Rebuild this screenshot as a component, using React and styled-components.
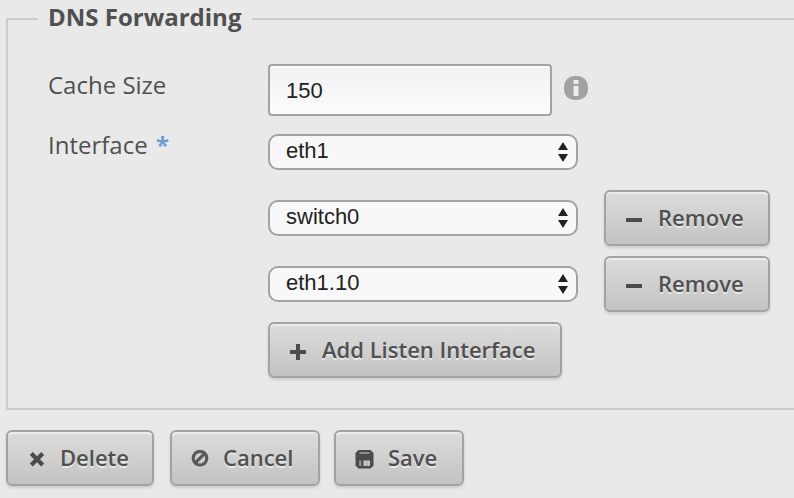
import React from "react";
import styled, { createGlobalStyle, css } from "styled-components";

const GlobalStyle = createGlobalStyle`
  * { box-sizing: border-box; }
  body {
    margin: 0;
    background: #e9e9e9;
    color: #505050;
    font-family: "Open Sans", sans-serif;
    overflow: hidden;
  }
`;

const Page = styled.main`
  width: 794px;
  height: 498px;
  padding: 3px 0 0 6px;
  overflow: hidden;
`;

const Panel = styled.section`
  display: flex;
  flex-direction: column;
  width: 820px;
  height: 407px;
`;

const PanelHead = styled.header`
  display: flex;
  align-items: flex-start;
  height: 30px;
`;

const Rule = styled.span`
  height: 15px;
  margin-top: 15px;
  border-top: 2px solid #ccc;
  ${(p) =>
    p.$lead
      ? css`
          width: 32px;
          border-left: 2px solid #ccc;
        `
      : css`
          flex: 1;
        `}
`;

const Legend = styled.h2`
  width: 214px;
  margin: 0;
  padding-left: 10px;
  font-size: 24px;
  line-height: 28px;
  font-weight: 700;
  white-space: nowrap;
`;

const PanelBody = styled.div`
  flex: 1;
  padding: 31px 0 0 40px;
  border: solid #ccc;
  border-width: 0 0 2px 2px;
`;

const Row = styled.div`
  display: grid;
  grid-template-columns: 220px 310px auto;
  align-items: center;
  height: ${(p) => p.$height}px;
  margin-bottom: ${(p) => p.$gap || 0}px;
`;

const Label = styled.label`
  font-size: 24px;
  line-height: 34px;
  align-self: start;
  margin-top: ${(p) => p.$offset}px;
  white-space: nowrap;
`;

const Required = styled.span`
  margin-left: 2px;
  color: #689fd3;
  font-weight: 700;
`;

const Field = styled.div`
  display: flex;
  align-items: center;
  gap: 12px;
`;

const TextInput = styled.input`
  flex: none;
  width: 284px;
  height: 52px;
  padding: 2px 16px 0;
  border: 2px solid #a3a3a3;
  border-radius: 4px;
  outline: 0;
  background: linear-gradient(#f1f1f1, #fcfcfc);
  box-shadow: inset 0 2px 0 #fff;
  color: #222;
  font: 22px "Liberation Sans", sans-serif;
`;

const SelectBox = styled.div`
  display: flex;
  align-items: center;
  justify-content: space-between;
  width: 310px;
  height: 36px;
  padding: 0 7px 0 16px;
  border: 2px solid #a3a3a3;
  border-radius: 10px;
  background: #f8f8f8;
  color: #222;
  font: 22px/25px "Liberation Sans", sans-serif;
`;

const SelectValue = styled.span`
  padding-bottom: 3px;
`;

const Button = styled.button`
  display: flex;
  align-items: center;
  width: ${(p) => p.$width}px;
  height: 56px;
  margin: 0 0 0 ${(p) => p.$indent || 0}px;
  padding: 0 0 2px ${(p) => p.$inset || 18}px;
  border: 2px solid #a3a3a3;
  border-radius: 6px;
  background: linear-gradient(#dcdcdc, #c3c3c3);
  box-shadow: inset 0 2px 0 #ececec, 0 2px 3px rgba(0, 0, 0, 0.12);
  color: #505050;
  font: 600 22px/30px "Open Sans", sans-serif;
  text-shadow: 0 2px 0 #e6e6e6;
  white-space: nowrap;
`;

const Glyph = styled.svg`
  flex: none;
  width: 20px;
  height: 20px;
  margin: 6px ${(p) => p.$gap}px 0 0;
  fill: #4b4b4b;
`;

const InfoBadge = styled.svg`
  flex: none;
  width: 24px;
  height: 24px;
  margin-bottom: 4px;
`;

const Actions = styled.footer`
  display: flex;
  padding-top: 20px;
`;

const icons = {
  minus: <rect x="2" y="8" width="16" height="4" rx="0.6" />,
  plus: <path d="M8 2h4v6h6v4h-6v6H8v-6H2V8h6z" />,
  close: (
    <path d="M5.8 2 10 6.2 14.2 2l3 3L13 9.2l4.2 4.2-3 3-4.2-4.2-4.2 4.2-3-3L7 9.2 2.8 5z" />
  ),
  cancel: (
    <g fill="none" stroke="#5a5a5a" strokeWidth="3.2">
      <circle cx="10" cy="8.2" r="6.8" />
      <path d="m5.5 12.7 9-9" />
    </g>
  ),
  save: (
    <>
      <path d="M3.5 0h12l3 3v12.5l-3 3h-12l-3-3V3z" />
      <path fill="#8c8c8c" d="M4.5 2h10v2h-10zM4 10.5h2.5V16H4z" />
      <path fill="#c6c6c6" d="M8.5 10.5H15V16H8.5z" />
      <path fill="#8c8c8c" d="M11 10.5h1.5V16H11z" opacity="0.4" />
    </>
  ),
};

function IconButton({ icon, gap, children, ...rest }) {
  return (
    <Button type="button" {...rest}>
      <Glyph viewBox="0 0 20 20" $gap={gap}>
        {icons[icon]}
      </Glyph>
      {children}
    </Button>
  );
}

function Select({ value }) {
  return (
    <SelectBox role="combobox" tabIndex={0}>
      <SelectValue>{value}</SelectValue>
      <svg width="12" height="20" viewBox="0 0 12 20" fill="#222">
        <path d="M6 0l5 8H1zM1 12h10l-5 8z" />
      </svg>
    </SelectBox>
  );
}

function InfoIcon() {
  return (
    <InfoBadge viewBox="0 0 24 24">
      <rect width="24" height="24" rx="10.5" fill="#a1a1a1" />
      <path fill="#ececec" d="M9.5 4h5v4h-5zM9.5 10h5v10h-5z" />
    </InfoBadge>
  );
}

export default function App() {
  return (
    <>
      <GlobalStyle />
      <Page>
        <Panel>
          <PanelHead>
            <Rule $lead />
            <Legend>DNS Forwarding</Legend>
            <Rule />
          </PanelHead>
          <PanelBody>
            <Row $height={52} $gap={18}>
              <Label $offset={4}>Cache Size</Label>
              <Field>
                <TextInput defaultValue="150" />
                <InfoIcon />
              </Field>
            </Row>
            <Row $height={36} $gap={20}>
              <Label $offset={-6}>
                Interface <Required>*</Required>
              </Label>
              <Select value="eth1" />
            </Row>
            <Row $height={56} $gap={10}>
              <span />
              <Select value="switch0" />
              <IconButton icon="minus" gap={14} $width={166} $indent={26}>
                Remove
              </IconButton>
            </Row>
            <Row $height={56} $gap={10}>
              <span />
              <Select value="eth1.10" />
              <IconButton icon="minus" gap={14} $width={166} $indent={26}>
                Remove
              </IconButton>
            </Row>
            <Row $height={56}>
              <span />
              <IconButton icon="plus" gap={14} $width={294}>
                Add Listen Interface
              </IconButton>
            </Row>
          </PanelBody>
        </Panel>
        <Actions>
          <IconButton icon="close" gap={13} $width={148} $inset={19}>
            Delete
          </IconButton>
          <IconButton icon="cancel" gap={13} $width={150} $indent={16}>
            Cancel
          </IconButton>
          <IconButton icon="save" gap={13} $width={130} $indent={14} $inset={19}>
            Save
          </IconButton>
        </Actions>
      </Page>
    </>
  );
}
